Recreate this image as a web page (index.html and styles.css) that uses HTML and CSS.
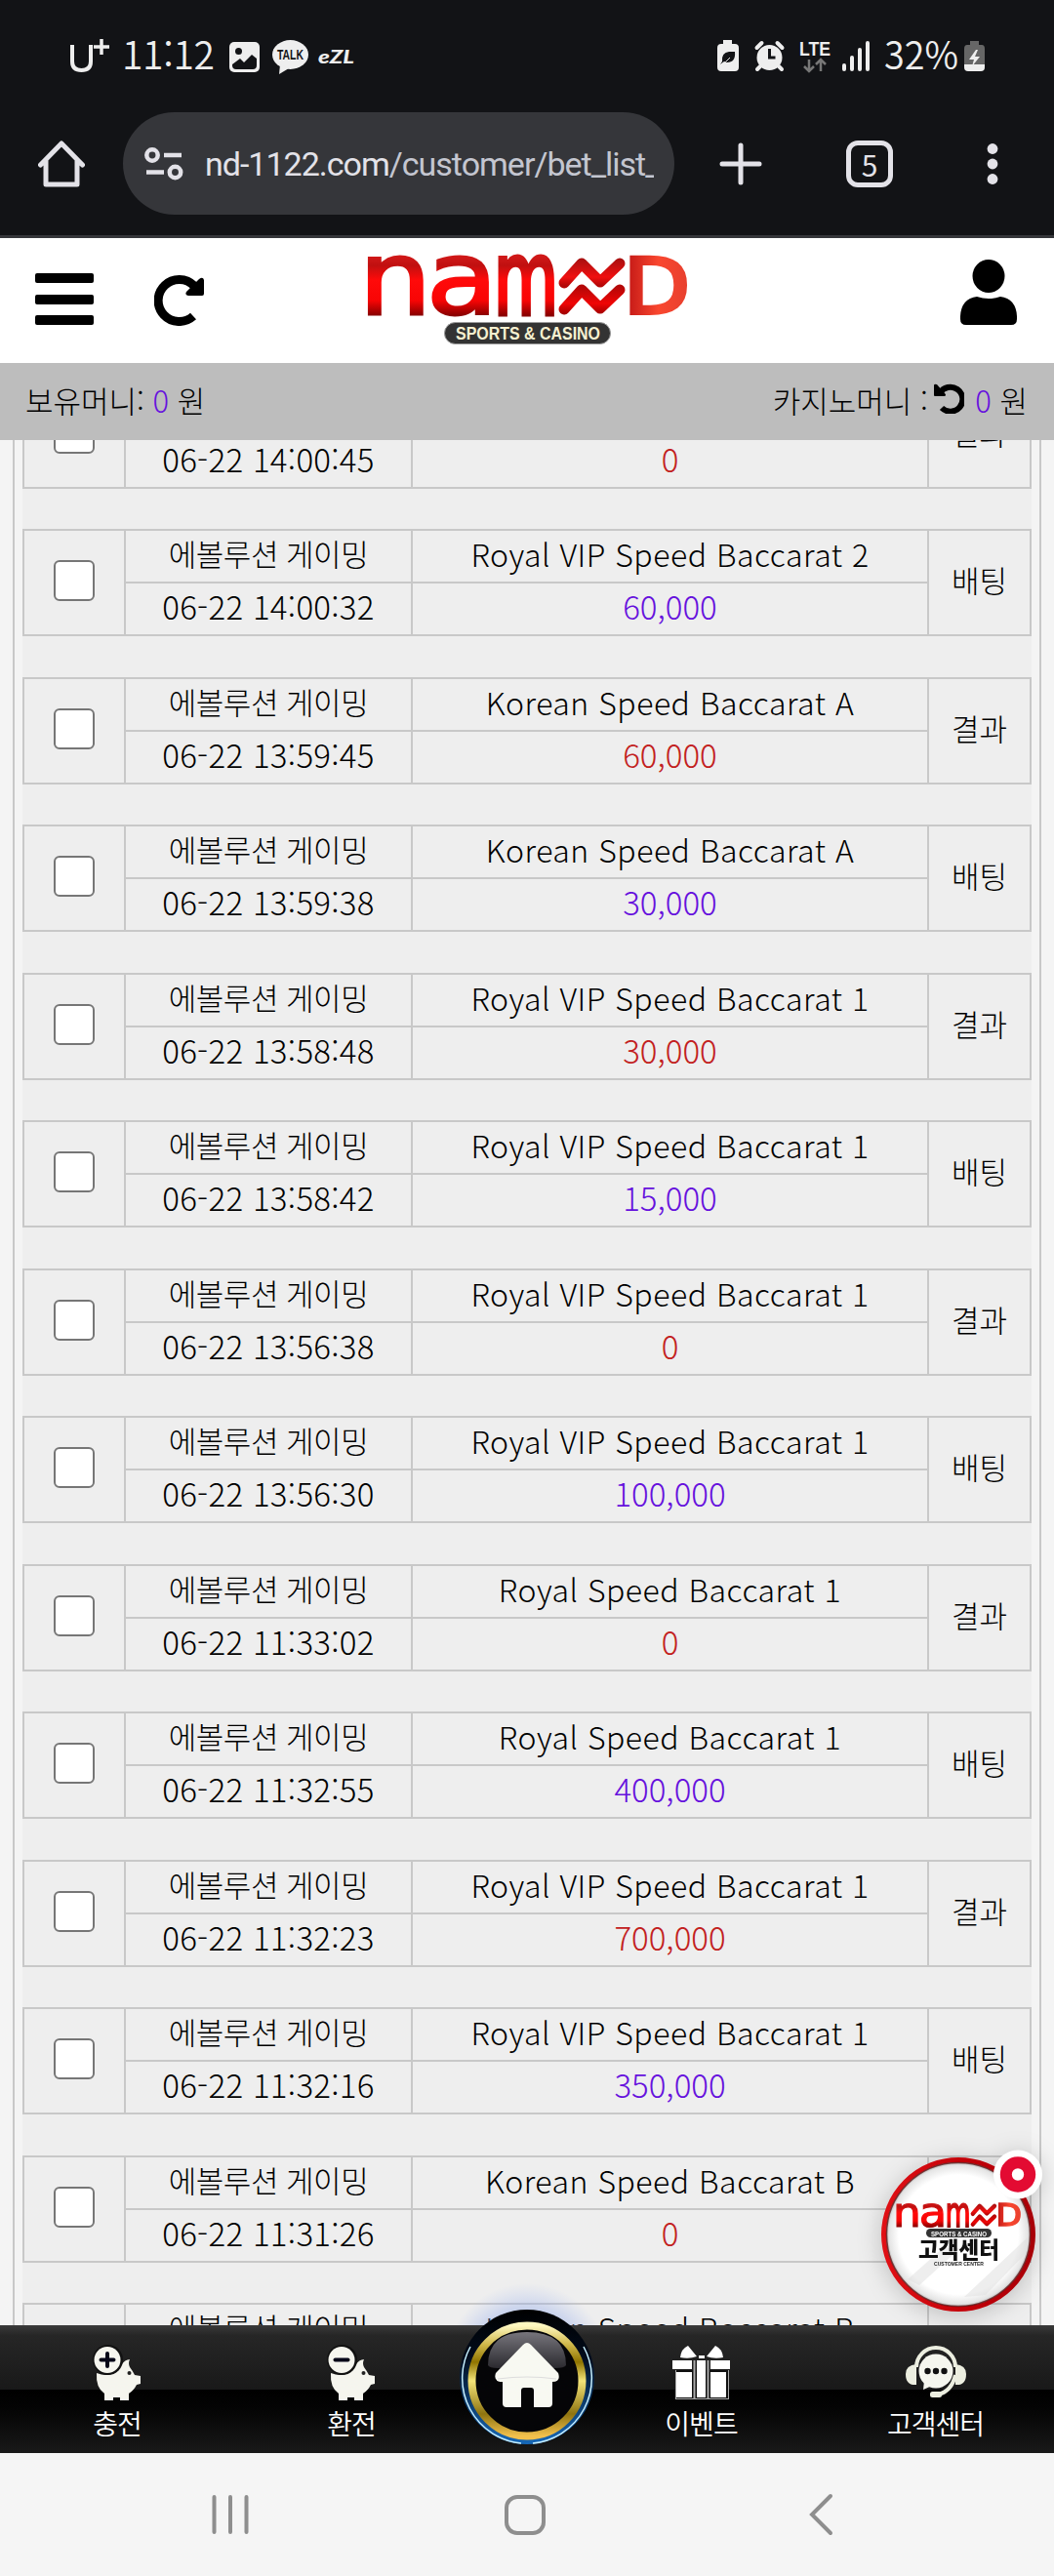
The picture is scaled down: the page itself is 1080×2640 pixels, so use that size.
FILE: index.html
```html
<!DOCTYPE HTML>
<html lang="ko">
<head>
	<meta charset="UTF-8" />
	<title>Bet list</title>
	<link rel="stylesheet" href="styles.css">
</head>
<body>

	<div class="status">
		<svg width="1080" height="115" viewBox="0 0 1080 115">
			<g fill="none" stroke="#eee" stroke-width="4">
				<path d="M74 46v17q0 9 9.500 9t9.500-9V46" />
				<path d="M104 40v16M96 48h16" stroke-width="3.500" />
			</g>
			<text class="clock" x="125" y="71" textLength="95" lengthAdjust="spacing">11:12</text>
			<rect x="235" y="43" width="31" height="31" rx="5" fill="#eee" />
			<circle cx="244.500" cy="52.500" r="3.500" fill="#121316" />
			<path d="M238 66l8-6 4 4 8-8 5 4v7q0 4-4 4h-17q-4 0-4-4z" fill="#121316" />
			<ellipse cx="297.500" cy="56" rx="18.500" ry="15" fill="#eee" />
			<path d="M287 66l-1 10 10-6z" fill="#eee" />
			<text class="talk" x="284" y="61" textLength="27" lengthAdjust="spacingAndGlyphs">TALK</text>
			<text class="ezl" x="326" y="65" textLength="37" lengthAdjust="spacingAndGlyphs">eZL</text>

			<path d="M741 41h9v4h3q4 0 4 4v20q0 4-4 4h-14q-4 0-4-4V49q0-4 4-4h2z" fill="#eee" />
			<path d="M740 63q-1-9 7-10h6q1 11-8 11-2 0-3-1l-4 3z" fill="#121316" />
			<path d="M739 66q5-2 9-7" stroke="#eee" fill="none" />
			<circle cx="788.500" cy="59" r="13" fill="#eee" />
			<path d="M775.500 49l5-5M801.500 49l-5-5M779 68l-3 3M798 68l3 3" stroke="#eee" stroke-width="4" stroke-linecap="round" />
			<path d="M788.500 50v9h6" stroke="#121316" stroke-width="3" fill="none" />
			<text class="lte" x="819" y="57" textLength="32" lengthAdjust="spacingAndGlyphs">LTE</text>
			<path d="M829 61v12M824 68l5 5 5-5M841 73V61M836 66l5-5 5 5" stroke="#777" stroke-width="2.500" fill="none" />
			<path d="M865 67v4M873 59v12M881 51v20M889 44v27" stroke="#eee" stroke-width="4" stroke-linecap="round" />
			<text class="clock" x="906" y="71" textLength="76" lengthAdjust="spacingAndGlyphs">32%</text>
			<path d="M994 42h9v4h3q3 0 3 4v16h-21V50q0-4 3-4h3z" fill="#666" />
			<path d="M988 66h21v3q0 4-4 4h-13q-4 0-4-4z" fill="#eee" />
			<path d="M1000 51l-7 10h5l-2 7 8-10h-5l3-7z" fill="#eee" />
		</svg>
	</div>

	<div class="browser">
		<svg class="b-home" width="48" height="48" viewBox="0 0 48 48">
			<path d="M2.500 25L24 3l21.500 22M8 21v24h32V21" fill="none" stroke="#e3e2e8" stroke-width="5" stroke-linejoin="round" stroke-linecap="round" />
		</svg>
		<div class="omnibox">
			<svg width="40" height="34" viewBox="0 0 40 34">
				<g fill="none" stroke="#e3e2e8" stroke-width="4.500">
					<circle cx="8" cy="8" r="5.700" />
					<circle cx="31.500" cy="25.500" r="5.700" />
					<path d="M20 8h18M2 25.500h18" />
				</g>
			</svg>
			<div class="url"><span>nd-1122.com</span>/customer/bet_list_</div>
		</div>
		<svg class="b-plus" width="44" height="44" viewBox="0 0 44 44">
			<path d="M22 3v38M3 22h38" stroke="#e3e2e8" stroke-width="5" stroke-linecap="round" />
		</svg>
		<div class="tabs">5</div>
		<svg class="b-more" width="12" height="44" viewBox="0 0 12 44" fill="#e3e2e8">
			<circle cx="6" cy="6.500" r="5.400" />
			<circle cx="6" cy="22" r="5.400" />
			<circle cx="6" cy="37.500" r="5.400" />
		</svg>
	</div>

	<div class="header">
		<div class="menu"><i></i><i></i><i></i></div>
		<svg class="reload" width="52" height="52" viewBox="0 0 52 52">
			<path d="M40 42A21.500 21.500 0 1 1 41 11" fill="none" stroke="#000" stroke-width="9" />
			<path d="M51 5v14q0 2-2 2H35q-4-1-2-4L46 4q4-3 5 1z" />
		</svg>
		<svg class="logo" width="328" height="92" viewBox="0 0 328 92">
			<defs>
				<linearGradient id="red" gradientUnits="userSpaceOnUse" x1="0" y1="0" x2="0" y2="60">
					<stop offset="0" stop-color="#d01818" />
					<stop offset=".15" stop-color="#c01010" />
					<stop offset=".4" stop-color="#ff0a0a" />
					<stop offset=".75" stop-color="#f80505" />
					<stop offset="1" stop-color="#8a0000" />
				</linearGradient>
				<linearGradient id="zig" gradientUnits="userSpaceOnUse" x1="0" y1="0" x2="0" y2="60">
					<stop offset="0" stop-color="#a01010" />
					<stop offset=".35" stop-color="#f01010" />
					<stop offset=".5" stop-color="#b00808" />
					<stop offset=".8" stop-color="#f00505" />
					<stop offset="1" stop-color="#900" />
				</linearGradient>
				<linearGradient id="orange" gradientUnits="userSpaceOnUse" x1="269" y1="0" x2="328" y2="0">
					<stop offset="0" stop-color="#c81c18" />
					<stop offset=".5" stop-color="#f9472f" />
					<stop offset="1" stop-color="#e8402e" />
				</linearGradient>
			</defs>
			<g id="mark">
				<g class="word" fill="url(#red)" stroke="url(#red)">
					<text x="-8" y="59" textLength="74" lengthAdjust="spacingAndGlyphs">n</text>
					<text x="61" y="59" textLength="73" lengthAdjust="spacingAndGlyphs">a</text>
					<text class="narrow" x="130" y="59" textLength="66" lengthAdjust="spacingAndGlyphs">m</text>
				</g>
				<path d="M202 27l18-20 19 19 20-19M202 54l18-20 19 19 20-19" fill="none" stroke="url(#zig)" stroke-width="11" stroke-linecap="round" stroke-linejoin="round" />
				<text class="word-d" fill="url(#orange)" stroke="url(#orange)" x="263" y="58" textLength="68" lengthAdjust="spacingAndGlyphs">D</text>
			</g>
			<rect x="79.500" y="67.500" width="170" height="22" rx="11" fill="#333" stroke="#999" />
			<text class="tagline" x="91" y="85" textLength="148" lengthAdjust="spacingAndGlyphs">SPORTS &amp; CASINO</text>
		</svg>
		<svg class="user" width="58" height="67" viewBox="0 0 58 67">
			<ellipse cx="29" cy="17" rx="16.500" ry="17" />
			<path d="M17 38q12 4 24 0 16 2 17 20v3q0 6-6 6H6q-6 0-6-6v-3q1-18 17-20z" />
		</svg>
	</div>

	<div class="money">
		<div>보유머니: <b>0</b> 원</div>
		<div>카지노머니 :
			<svg width="31" height="31" viewBox="0 0 31 31">
				<path d="M6 10A12.500 12.500 0 1 1 8 25" fill="none" stroke="#000" stroke-width="6" />
				<path d="M0 2v10q0 1 1 1h10q2-1 0-3L3 1Q0 0 0 2z" />
			</svg>
			<b>0</b> 원
		</div>
	</div>

	<div class="page">
		<div class="list">
			<div class="bet">
				<div class="check"><input type="checkbox" /></div>
				<div class="company">에볼루션 게이밍</div>
				<div class="game">Royal VIP Speed Baccarat 2</div>
				<div class="type">결과</div>
				<div class="date">06-22 14:00:45</div>
				<div class="sum win">0</div>
			</div>
			<div class="bet">
				<div class="check"><input type="checkbox" /></div>
				<div class="company">에볼루션 게이밍</div>
				<div class="game">Royal VIP Speed Baccarat 2</div>
				<div class="type">배팅</div>
				<div class="date">06-22 14:00:32</div>
				<div class="sum">60,000</div>
			</div>
			<div class="bet">
				<div class="check"><input type="checkbox" /></div>
				<div class="company">에볼루션 게이밍</div>
				<div class="game">Korean Speed Baccarat A</div>
				<div class="type">결과</div>
				<div class="date">06-22 13:59:45</div>
				<div class="sum win">60,000</div>
			</div>
			<div class="bet">
				<div class="check"><input type="checkbox" /></div>
				<div class="company">에볼루션 게이밍</div>
				<div class="game">Korean Speed Baccarat A</div>
				<div class="type">배팅</div>
				<div class="date">06-22 13:59:38</div>
				<div class="sum">30,000</div>
			</div>
			<div class="bet">
				<div class="check"><input type="checkbox" /></div>
				<div class="company">에볼루션 게이밍</div>
				<div class="game">Royal VIP Speed Baccarat 1</div>
				<div class="type">결과</div>
				<div class="date">06-22 13:58:48</div>
				<div class="sum win">30,000</div>
			</div>
			<div class="bet">
				<div class="check"><input type="checkbox" /></div>
				<div class="company">에볼루션 게이밍</div>
				<div class="game">Royal VIP Speed Baccarat 1</div>
				<div class="type">배팅</div>
				<div class="date">06-22 13:58:42</div>
				<div class="sum">15,000</div>
			</div>
			<div class="bet">
				<div class="check"><input type="checkbox" /></div>
				<div class="company">에볼루션 게이밍</div>
				<div class="game">Royal VIP Speed Baccarat 1</div>
				<div class="type">결과</div>
				<div class="date">06-22 13:56:38</div>
				<div class="sum win">0</div>
			</div>
			<div class="bet">
				<div class="check"><input type="checkbox" /></div>
				<div class="company">에볼루션 게이밍</div>
				<div class="game">Royal VIP Speed Baccarat 1</div>
				<div class="type">배팅</div>
				<div class="date">06-22 13:56:30</div>
				<div class="sum">100,000</div>
			</div>
			<div class="bet">
				<div class="check"><input type="checkbox" /></div>
				<div class="company">에볼루션 게이밍</div>
				<div class="game">Royal Speed Baccarat 1</div>
				<div class="type">결과</div>
				<div class="date">06-22 11:33:02</div>
				<div class="sum win">0</div>
			</div>
			<div class="bet">
				<div class="check"><input type="checkbox" /></div>
				<div class="company">에볼루션 게이밍</div>
				<div class="game">Royal Speed Baccarat 1</div>
				<div class="type">배팅</div>
				<div class="date">06-22 11:32:55</div>
				<div class="sum">400,000</div>
			</div>
			<div class="bet">
				<div class="check"><input type="checkbox" /></div>
				<div class="company">에볼루션 게이밍</div>
				<div class="game">Royal VIP Speed Baccarat 1</div>
				<div class="type">결과</div>
				<div class="date">06-22 11:32:23</div>
				<div class="sum win">700,000</div>
			</div>
			<div class="bet">
				<div class="check"><input type="checkbox" /></div>
				<div class="company">에볼루션 게이밍</div>
				<div class="game">Royal VIP Speed Baccarat 1</div>
				<div class="type">배팅</div>
				<div class="date">06-22 11:32:16</div>
				<div class="sum">350,000</div>
			</div>
			<div class="bet">
				<div class="check"><input type="checkbox" /></div>
				<div class="company">에볼루션 게이밍</div>
				<div class="game">Korean Speed Baccarat B</div>
				<div class="type"></div>
				<div class="date">06-22 11:31:26</div>
				<div class="sum win">0</div>
			</div>
			<div class="bet">
				<div class="check"></div>
				<div class="company">에볼루션 게이밍</div>
				<div class="game">Korean Speed Baccarat B</div>
				<div class="type"></div>
				<div class="date"></div>
				<div class="sum"></div>
			</div>
		</div>

		<svg class="support" width="190" height="190" viewBox="0 0 190 190">
			<defs>
				<radialGradient id="paper">
					<stop offset=".8" stop-color="#fff" />
					<stop offset=".93" stop-color="#e4e4e4" />
					<stop offset="1" stop-color="#888" />
				</radialGradient>
				<linearGradient id="rim">
					<stop offset="0" stop-color="#e01015" />
					<stop offset=".6" stop-color="#c00008" />
					<stop offset="1" stop-color="#a80008" />
				</linearGradient>
			</defs>
			<circle cx="92" cy="100" r="76.500" fill="url(#paper)" />
			<path d="M40 146l36-32h18l-42 38zM98 164l66-62v14l-44 46z" fill="#ddd" opacity=".5" />
			<circle cx="92" cy="100" r="76.500" fill="none" stroke="url(#rim)" stroke-width="5" />
			<circle cx="92" cy="100" r="73.500" fill="none" stroke="#500" stroke-width="1.500" opacity=".7" />
			<use href="#mark" transform="translate(28 68) scale(.39 .4)" />
			<rect x="59" y="94" width="67" height="9" rx="4.500" fill="#333" />
			<text class="s-tag" x="64" y="101.500" textLength="57" lengthAdjust="spacingAndGlyphs">SPORTS &amp; CASINO</text>
			<text class="s-name" x="51" y="124" textLength="83" lengthAdjust="spacingAndGlyphs">고객센터</text>
			<text class="s-sub" x="67" y="132" textLength="51" lengthAdjust="spacingAndGlyphs">CUSTOMER CENTER</text>
			<circle cx="153" cy="38.500" r="25" fill="#fff" />
			<circle cx="153" cy="38.500" r="12.200" fill="none" stroke="#e30b32" stroke-width="12" />
		</svg>
	</div>

	<div class="dock">
		<div class="item">
			<svg width="50" height="60" viewBox="0 0 50 60">
				<use href="#pig" />
				<path d="M15 10v13M8.500 16.500h13" stroke="#060618" stroke-width="4" stroke-linecap="round" />
			</svg>
			충전
		</div>
		<div class="item">
			<svg width="50" height="60" viewBox="0 0 50 60">
				<g id="pig">
					<path d="M4 30q10 4 18 0 5-2 7-8 4-6 9-6-2 4 0 8 3 4 5 8l6 1v8l-4 1q-3 6-8 9v7h-9v-3h-7v3H12v-7Q3 45 4 30z" fill="#f5f5ee" />
					<circle cx="37.500" cy="30" r="2" fill="#222" />
					<circle cx="15.500" cy="16.500" r="15.500" fill="#111" />
					<circle cx="15" cy="16.500" r="13.500" fill="#f5f5ee" />
				</g>
				<path d="M8.500 16.500h13" stroke="#060618" stroke-width="4" stroke-linecap="round" />
			</svg>
			환전
		</div>
		<div class="item mid"></div>
		<div class="item">
			<svg width="62" height="60" viewBox="0 0 62 60">
				<path d="M4 27h55v30H4z" fill="#aaa" />
				<path d="M5 27h53v29H5z" fill="#111" />
				<g fill="#fff">
					<path d="M9 14q1-9 8-12l9 11q-8 3-17 1zM53 14q-1-9-8-12l-9 11q8 3 17 1z" />
					<path d="M1 17h20v9H1zM40 17h20v9H40zM5 29h16v26H5zM40 29h16v26H40zM26 17h9v38h-9zM28 12h6v3h-6z" />
				</g>
				<path d="M22.500 17h2v39h-2zM36.500 17h2v39h-2z" fill="#aaa" />
			</svg>
			이벤트
		</div>
		<div class="item">
			<svg width="64" height="60" viewBox="0 0 64 60">
				<path d="M12 24a20 20 0 0 1 40 0M52 32q-4 17-18 20" fill="none" stroke="#eceee0" stroke-width="4" />
				<path d="M12 21v21q-11 1-11-11 0-9 11-10zM52 21v21q11 1 11-11 0-9-11-10z" fill="#eceee0" />
				<circle cx="32" cy="28" r="17.500" fill="#f5f6ee" />
				<path d="M20 38l-1 9 9-4z" fill="#f5f6ee" />
				<g fill="#111"><circle cx="23.500" cy="28" r="3.200" /><circle cx="32" cy="28" r="3.200" /><circle cx="40.500" cy="28" r="3.200" /></g>
				<rect x="26" y="49" width="12" height="6" rx="2.500" fill="#eceee0" />
			</svg>
			고객센터
		</div>

		<svg class="home" width="200" height="170" viewBox="0 0 200 170">
			<defs>
				<radialGradient id="glow">
					<stop offset=".5" stop-color="#7d9be8" stop-opacity=".6" />
					<stop offset="1" stop-color="#9db4f0" stop-opacity="0" />
				</radialGradient>
				<linearGradient id="gold" x1="0" y1="0" x2="0" y2="1">
					<stop offset="0" stop-color="#fff8c0" />
					<stop offset=".17" stop-color="#d0b84a" />
					<stop offset=".33" stop-color="#8f7400" />
					<stop offset=".5" stop-color="#f4e478" />
					<stop offset=".8" stop-color="#8f7410" />
					<stop offset="1" stop-color="#f2c04c" />
				</linearGradient>
				<linearGradient id="blue" x1="0" y1="0" x2="0" y2="1">
					<stop offset="0" stop-color="#000" />
					<stop offset=".35" stop-color="#020c1c" />
					<stop offset="1" stop-color="#1668b8" />
				</linearGradient>
				<linearGradient id="gloss" x1="0" y1="0" x2="0" y2="1">
					<stop offset="0" stop-color="#77757c" />
					<stop offset="1" stop-color="#2b2a2f" />
				</linearGradient>
				<clipPath id="above"><rect width="200" height="43" /></clipPath>
			</defs>
			<circle cx="100" cy="84" r="84" fill="url(#glow)" clip-path="url(#above)" />
			<circle cx="100" cy="96" r="69" fill="url(#blue)" />
			<path d="M42 65A67 67 0 0 0 94 164M158 65A67 67 0 0 1 106 164" fill="none" stroke="#c8f0ff" stroke-width="1.500" />
			<circle cx="100" cy="100" r="56.500" fill="#050507" stroke="url(#gold)" stroke-width="8" />
			<path d="M60 84Q60 50 100 50t40 34q-3 6-40 0-37 6-40 0z" fill="url(#gloss)" />
			<path d="M96 63q4-4 8 0l28 29q3 9-6 9v22q0 4-4 4h-15v-17q0-3-3-3h-7q-3 0-3 3v17H79q-4 0-4-4v-22q-10 0-7-9z" fill="#f8f9f2" />
			<path d="M70 98q30-4 60 0" stroke="#ddd" fill="none" />
		</svg>
	</div>

	<div class="system">
		<svg width="1080" height="126" viewBox="0 0 1080 126">
			<g fill="none" stroke="#8e8e8e" stroke-width="4" stroke-linecap="round">
				<path d="M219.500 45v36M236 45v36M252.500 45v36" />
				<rect x="519" y="45" width="38" height="37" rx="11" />
				<path d="M851 44l-19 19 19 19" />
			</g>
		</svg>
	</div>

</body>
</html>
```

FILE: styles.css
```css
* {
	box-sizing: border-box;
	margin: 0;
	padding: 0;
}
body {
	background-color: #f4f4f4;
	font-family: "Noto Sans CJK KR", sans-serif;
	font-weight: 300;
	width: 1080px;
}
svg {
	display: block;
	flex: none;
}
.status {
	background-color: #121316;
	height: 115px;
}
.clock {
	fill: #eee;
	font: 350 39px "Noto Sans CJK KR", sans-serif;
}
.talk {
	fill: #121316;
	font: bold 14px "Liberation Sans", sans-serif;
}
.ezl {
	fill: #eee;
	font: italic 900 19px Lato, sans-serif;
}
.lte {
	fill: #eee;
	font: bold 20px "Liberation Sans", sans-serif;
}

.browser {
	align-items: center;
	background-color: #121316;
	border-bottom: 3px solid #35363a;
	display: flex;
	height: 129px;
	padding: 0 57px 21px 39px;
}
.omnibox {
	align-items: center;
	background-color: #35363a;
	border-radius: 53px;
	display: flex;
	height: 105px;
	margin-left: 39px;
	padding-left: 22px;
	width: 565px;
}
.url {
	color: #c4c6d0;
	font: 400 34px/50px Roboto, sans-serif;
	letter-spacing: -1px;
	margin-left: 22px;
	overflow: hidden;
	white-space: nowrap;
	width: 460px;
}
.url span {
	color: #e3e2e8;
}
.b-plus {
	margin-left: 46px;
}
.tabs {
	border: 5px solid #e3e2e8;
	border-radius: 12px;
	color: #e3e2e8;
	font: 400 30px/38px "Noto Sans CJK KR", sans-serif;
	height: 48px;
	margin-left: 86px;
	text-align: center;
	width: 48px;
}
.b-more {
	margin-left: 96px;
}

.header {
	background-color: white;
	display: flex;
	height: 128px;
	padding: 0 36px;
}
.menu {
	margin-top: 36px;
	width: 60px;
}
.menu i {
	background-color: black;
	border-radius: 2px;
	display: block;
	height: 10px;
	margin-bottom: 11.500px;
}
.reload {
	margin: 38px 0 0 62px;
}
.logo {
	margin: 19px 0 0 166px;
	overflow: visible;
}
.word {
	font: 105px "DejaVu Sans", sans-serif;
	stroke-width: 3px;
}
.narrow {
	stroke-width: 5px;
}
.word-d {
	font: 78px "DejaVu Sans", sans-serif;
	stroke-width: 4px;
}
.tagline {
	fill: #f6f0d0;
	font: bold 19px "Liberation Sans", sans-serif;
}
.user {
	margin: 22px 0 0 280px;
}

.money {
	align-items: center;
	background-color: #bdbdbd;
	display: flex;
	font-size: 31px;
	height: 79px;
	justify-content: space-between;
	line-height: 50px;
	padding: 0 27px 4px 26px;
}
.money b {
	color: #6611dd;
	font-weight: 300;
}
.money svg {
	display: inline-block;
	margin: 0 3px 0 -3px;
	vertical-align: -1px;
}

.page {
	height: 1932px;
	overflow: hidden;
	padding: 0 13px;
	position: relative;
}
.list {
	background: linear-gradient(#eee, #eee) 8px 0 / 1034px 100% no-repeat;
	border: solid #c8c8c8;
	border-width: 0 2px;
	color: black;
	margin-top: -60.500px;
	padding: 0 8px;
}
.bet {
	border: 2px solid #c8c8c8;
	display: grid;
	grid-template-columns: 102px 294px 529px 1fr;
	grid-template-rows: 52px 54px;
	height: 110px;
	margin-bottom: 41.500px;
	text-align: center;
}
.check {
	align-items: center;
	display: flex;
	grid-row: span 2;
	justify-content: center;
	padding: 0 0 4px;
}
.check input {
	appearance: none;
	background-color: white;
	border: 2px solid #767676;
	border-radius: 6px;
	height: 42px;
	width: 42px;
}
.company,
.date,
.game,
.sum {
	border-left: 2px solid #c8c8c8;
}
.date,
.sum {
	border-top: 2px solid #c8c8c8;
	font-size: 33px;
	line-height: 46px;
}
.date {
	letter-spacing: .300px;
}
.company {
	font-size: 31px;
	letter-spacing: -.500px;
	line-height: 46px;
}
.game {
	font-size: 32px;
	letter-spacing: .500px;
	line-height: 46px;
}
.type {
	border-left: 2px solid #c8c8c8;
	font-size: 31px;
	grid-column: 4;
	grid-row: 1 / span 2;
	line-height: 100px;
}
.sum {
	color: #6611dd;
}
.win {
	color: #c22020;
}
.support {
	filter: drop-shadow(0 4px 12px rgba(0, 0, 0, .2));
	left: 890px;
	position: absolute;
	top: 1739px;
}
.s-tag {
	fill: #fff;
	font: bold 8px "Liberation Sans", sans-serif;
}
.s-name {
	fill: #111;
	font: 900 23px "Noto Sans CJK KR", sans-serif;
}
.s-sub {
	fill: #222;
	font: bold 6px "Liberation Sans", sans-serif;
}

.dock {
	background: linear-gradient(#3a3a3a, #262626 8%, #191919 50%, #000 50.500%, #040404 65%, #191919);
	color: white;
	display: grid;
	grid-template-columns: 240px 240px 119px 239px 241px;
	height: 131px;
	position: relative;
}
.item {
	align-items: center;
	display: flex;
	flex-direction: column;
	font-size: 28px;
	font-weight: 350;
	letter-spacing: -1px;
	line-height: 40px;
	padding-top: 19px;
}
.item svg {
	margin-bottom: 1px;
}
.home {
	left: 440px;
	position: absolute;
	top: -43px;
}

.system {
	background-color: #f5f5f5;
	height: 126px;
}
```
